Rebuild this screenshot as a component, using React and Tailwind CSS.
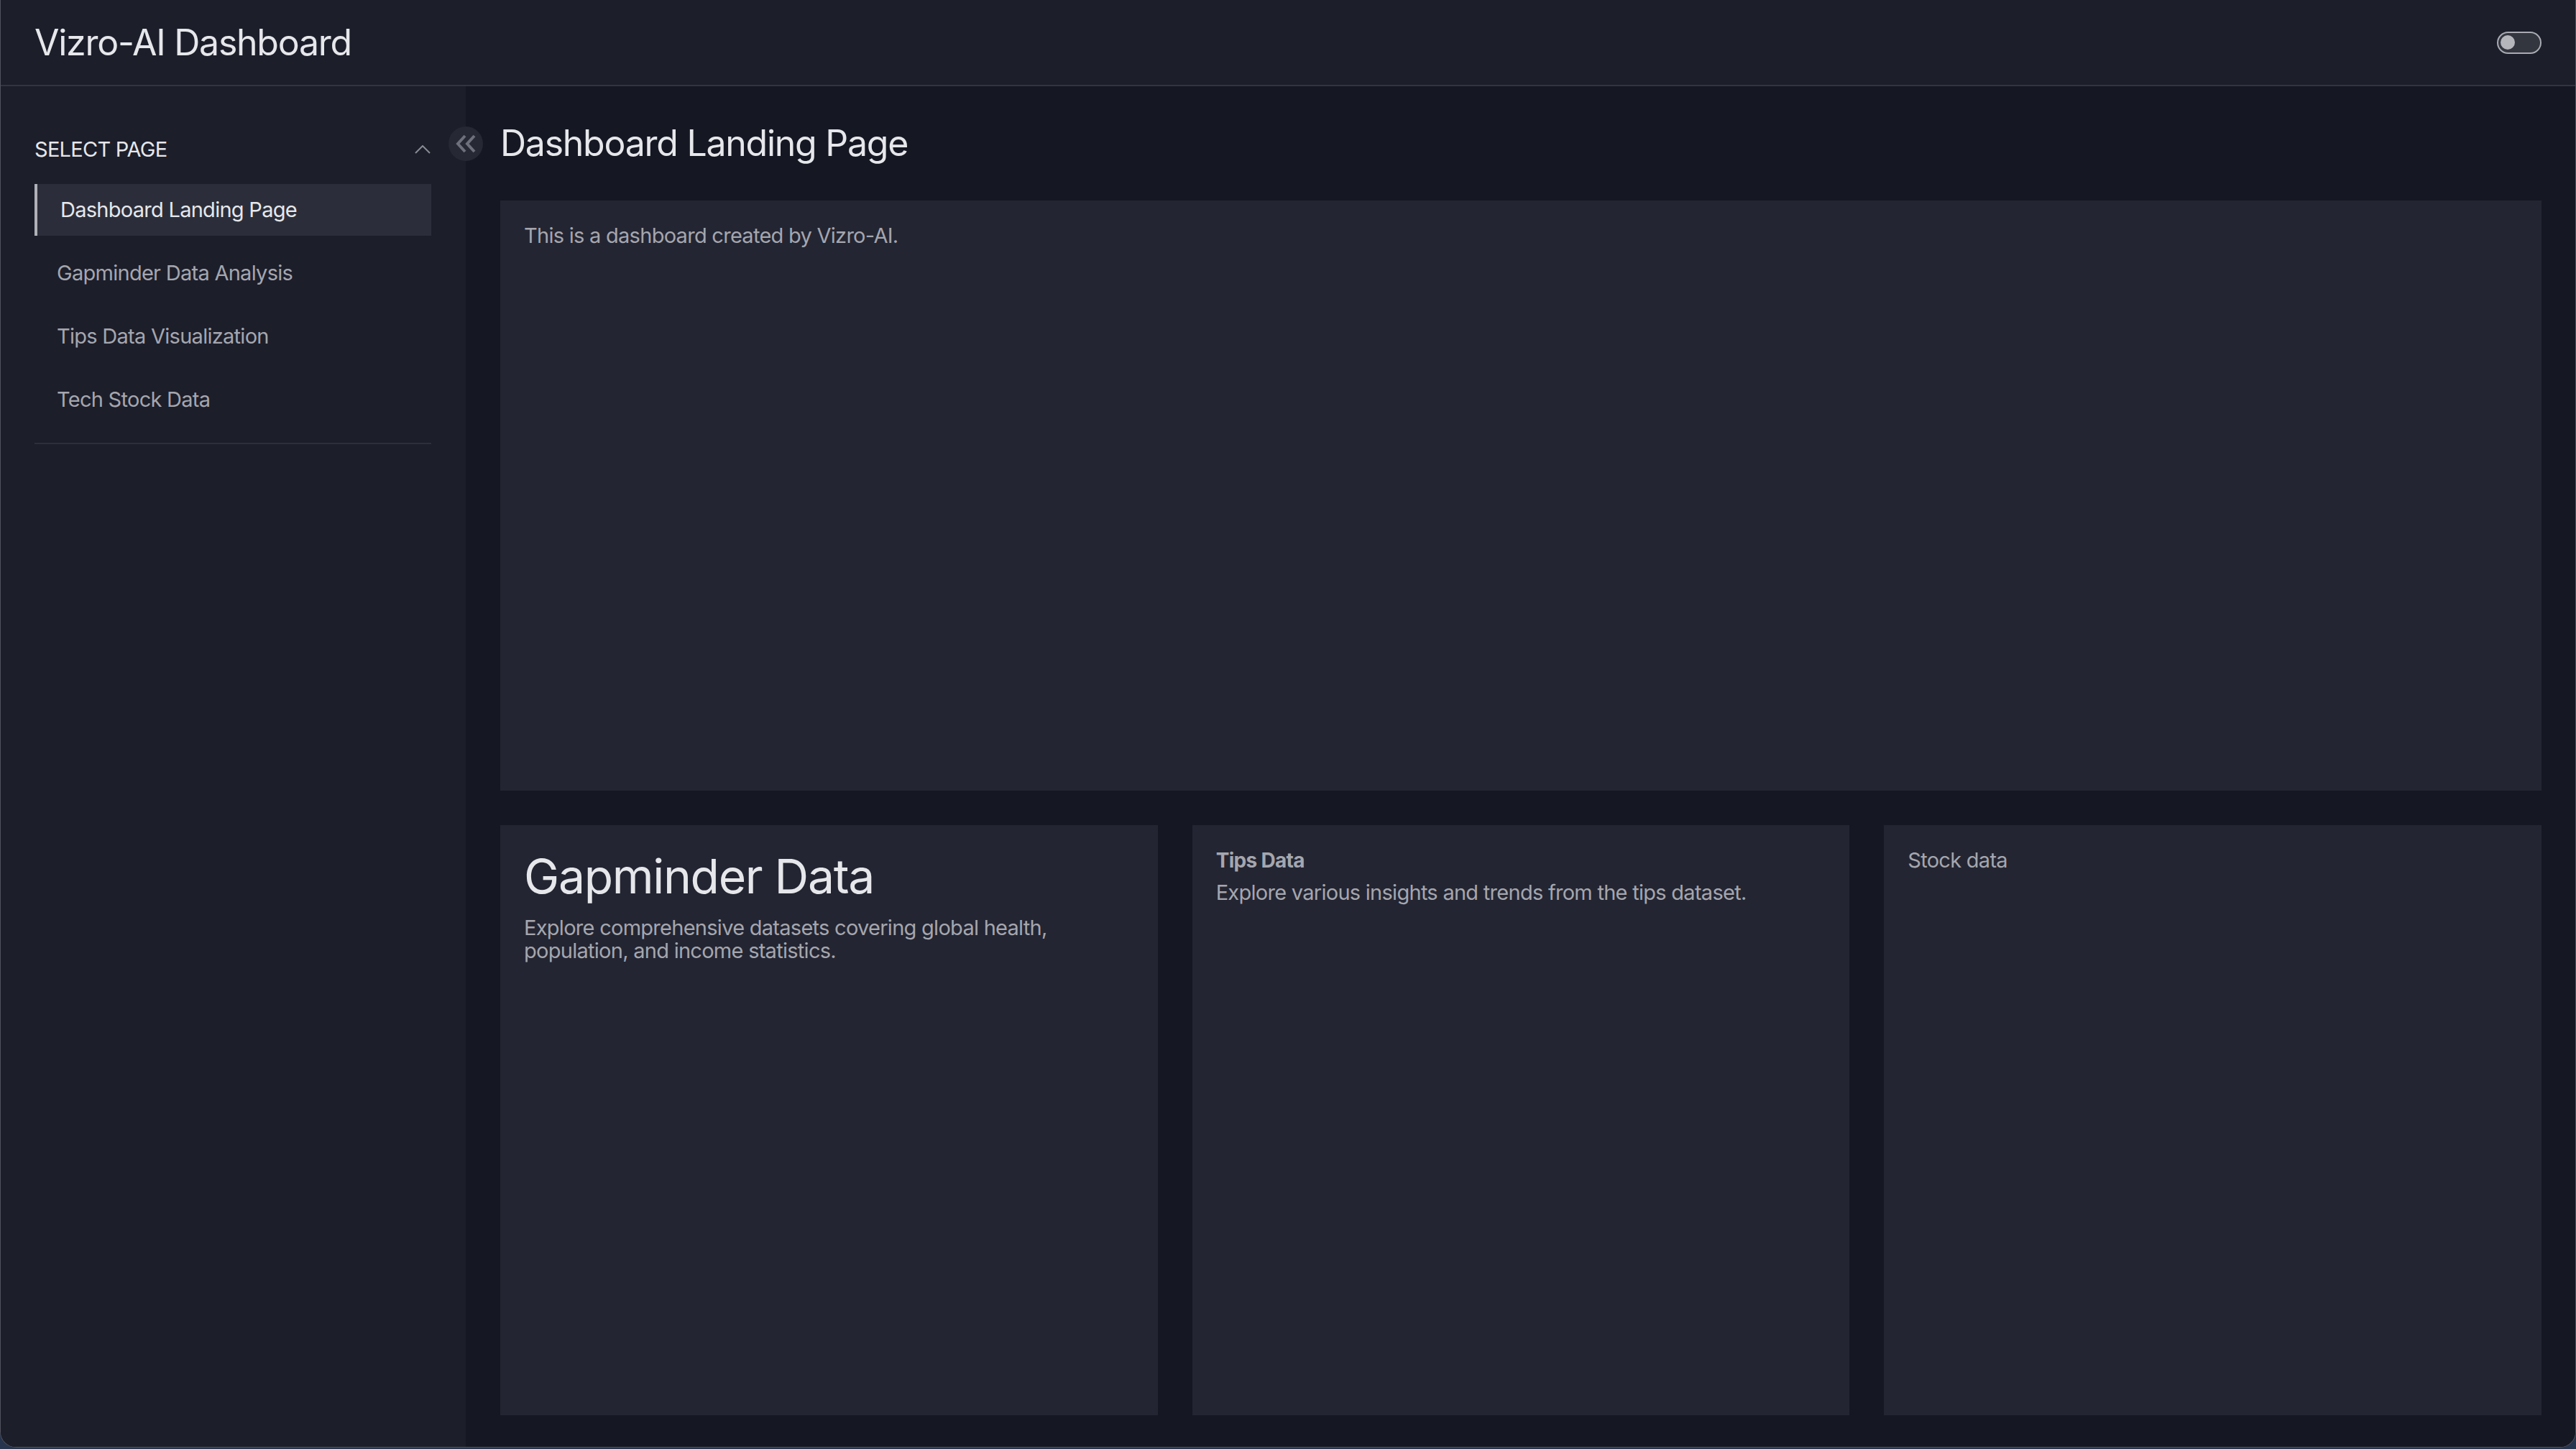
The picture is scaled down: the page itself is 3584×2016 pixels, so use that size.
const pages = [
  'Dashboard Landing Page',
  'Gapminder Data Analysis',
  'Tips Data Visualization',
  'Tech Stock Data',
];

function ThemeToggle() {
  return (
    <div className="flex h-[31px] w-[62px] items-center rounded-full border-2 border-[#a9aab2] bg-[#33353f] pl-[3px]">
      <div className="h-[20px] w-[20px] rounded-full bg-[#b5b6bc]" />
    </div>
  );
}

function Sidebar() {
  const active = 'Dashboard Landing Page';
  return (
    <aside className="w-[647px] shrink-0 bg-[#1c1e2a] pl-[47px] pr-[48px] pt-[72px]">
      <div className="flex h-[32px] items-center justify-between">
        <span className="text-[29px] leading-[32px] tracking-[-0.025em] text-[#e6e7eb]">SELECT PAGE</span>
        <svg width="22" height="12" viewBox="0 0 22 12" className="mr-[1px]">
          <polyline points="1,11 11,1 21,11" fill="none" stroke="#8a8b93" strokeWidth="2" />
        </svg>
      </div>
      <nav className="mt-[32px] flex flex-col gap-[16px]">
        {pages.map(page => (
          <div
            key={page}
            className={`flex h-[72px] items-center text-[29px] leading-[32px] tracking-[-0.025em] ${
              page === active
                ? 'border-l-4 border-[#b0b1b8] bg-[#2b2e3a] pl-[32px] text-[#e6e7eb]'
                : 'pl-[31px] text-[#a5a6ae]'
            }`}
          >
            {page}
          </div>
        ))}
      </nav>
      <div className="mt-[24px] h-[2px] bg-[#2d303c]" />
    </aside>
  );
}

function Card({ className = '', children }) {
  return <div className={`bg-[#232532] p-[33px] ${className}`}>{children}</div>;
}

export default function App() {
  return (
    <div className="h-[2016px] w-[3584px] bg-[#27344d] font-['Inter','Noto_Sans',sans-serif]">
      <div className="flex h-[2014px] flex-col overflow-hidden rounded-b-[22px] border-x border-b border-[#50525c] bg-[#1c1e2a]">
        {/* header */}
        <header className="flex h-[120px] shrink-0 items-center justify-between border-b-2 border-[#32343f] pl-[47px] pr-[47px]">
          <h1 className="text-[50px] font-normal leading-[64px] tracking-[-0.025em] text-[#e6e7eb]">Vizro-AI Dashboard</h1>
          <ThemeToggle />
        </header>

        <div className="flex flex-1">
          <Sidebar />

          <main className="relative flex flex-1 flex-col bg-[#151722] pb-[44px] pl-[48px] pr-[47px] pt-[47px]">
            <button className="absolute left-[-24px] top-[56px] flex h-[48px] w-[48px] items-center justify-center rounded-full bg-[#262833]">
              <svg width="30" height="26" viewBox="0 0 30 26">
                <path d="M14 2 L4 13 L14 24" fill="none" stroke="#6e707b" strokeWidth="4" />
                <path d="M27 2 L17 13 L27 24" fill="none" stroke="#6e707b" strokeWidth="4" />
              </svg>
            </button>

            <h2 className="mb-[48px] text-[50px] font-normal leading-[64px] tracking-[-0.025em] text-[#e6e7eb]">Dashboard Landing Page</h2>

            <div className="grid flex-1 grid-cols-3 grid-rows-2 gap-[48px]">
              <Card className="col-span-3">
                <p className="text-[29px] leading-[32px] tracking-[-0.025em] text-[#a5a6ae]">This is a dashboard created by Vizro-AI.</p>
              </Card>
              <Card>
                <h3 className="text-[66px] font-normal leading-[76px] tracking-[-0.02em] text-[#e6e7eb]">Gapminder Data</h3>
                <p className="mt-[18px] text-[29px] leading-[32px] tracking-[-0.025em] text-[#a5a6ae]">
                  Explore comprehensive datasets covering global health, population, and income statistics.
                </p>
              </Card>
              <Card>
                <h4 className="text-[28px] font-bold leading-[32px] tracking-[-0.025em] text-[#a5a6ae]">Tips Data</h4>
                <p className="mt-[13px] text-[29px] leading-[32px] tracking-[-0.025em] text-[#a5a6ae]">
                  Explore various insights and trends from the tips dataset.
                </p>
              </Card>
              <Card>
                <p className="text-[29px] leading-[32px] tracking-[-0.025em] text-[#a5a6ae]">Stock data</p>
              </Card>
            </div>
          </main>
        </div>
      </div>
    </div>
  );
}
